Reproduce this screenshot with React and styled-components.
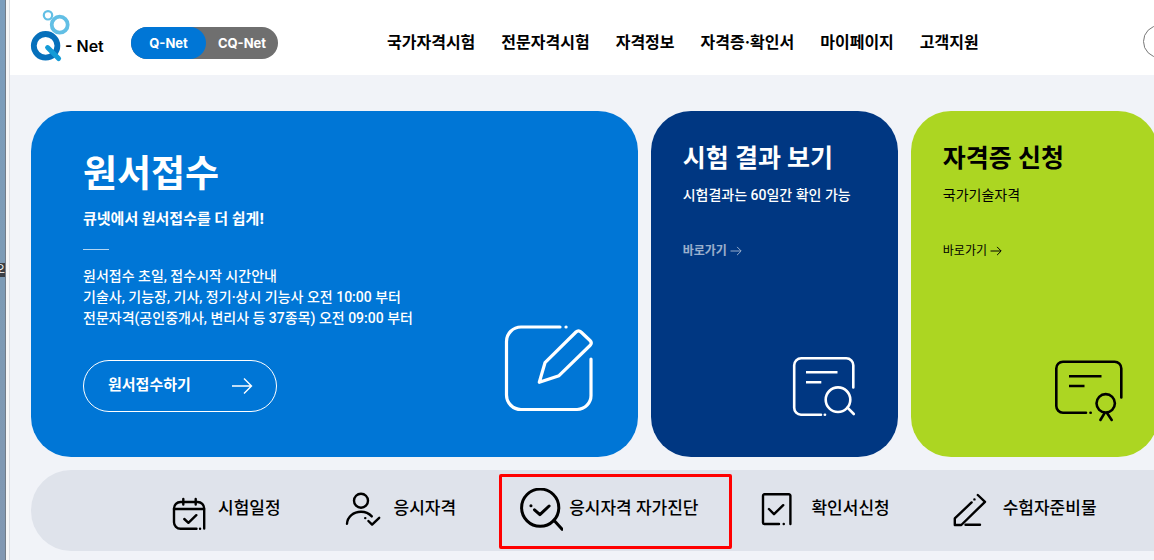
import React from "react";
import styled, { createGlobalStyle, css } from "styled-components";

const GlobalStyle = createGlobalStyle`
  * {
    box-sizing: border-box;
  }

  body {
    margin: 0;
    overflow: hidden;
    background: #f1f3f8;
    color: #000;
    font-family: Inter, "Noto Sans CJK KR", sans-serif;
  }

  h2, p, ul {
    margin: 0;
    padding: 0;
  }

  a {
    color: inherit;
    text-decoration: none;
  }
`;

const korean = `Roboto, "Noto Sans CJK KR", sans-serif`;

const navItems = [
  "국가자격시험",
  "전문자격시험",
  "자격정보",
  "자격증·확인서",
  "마이페이지",
  "고객지원",
];

const Logo = () => (
  <LogoLink href="#home" aria-label="Q-Net">
    <svg width="34" height="54" viewBox="0 0 34 54" fill="none">
      <circle cx="17" cy="5.3" r="4.2" stroke="#62bfe5" strokeWidth="2.2" />
      <circle cx="28.7" cy="14.7" r="8" stroke="#62bfe5" strokeWidth="3.8" />
      <circle cx="14.6" cy="35.8" r="11.8" stroke="#0670bb" strokeWidth="5.8" />
      <path d="M16.6 37.6L27.6 48.6" stroke="#149bd7" strokeWidth="5" strokeLinecap="round" />
    </svg>
    <LogoText>- Net</LogoText>
  </LogoLink>
);

const Arrow = ({ size, weight }) => (
  <svg width={size} height={size} viewBox="0 0 22 22" fill="none" stroke="currentColor" strokeWidth={weight}>
    <path d="M1 11H20M13 3.5L20.5 11L13 18.5" />
  </svg>
);

const WriteIcon = () => (
  <Drawing width="90" height="88" viewBox="0 0 90 88" strokeWidth="3.2">
    <path d="M56 3H17A14.5 14.5 0 0 0 2.5 17.5V71A14.5 14.5 0 0 0 17 85.5H73A14 14 0 0 0 87 71V35" />
    <path d="M62 3H62.1" />
    <path d="M35.3 58.3L41 38.7L72 8Q74.5 5.5 77 8L86 16.5Q88.5 19 86 21.5L55 51.7Z" />
  </Drawing>
);

const ResultIcon = () => (
  <Drawing width="72" height="66" viewBox="0 0 72 66" strokeWidth="2.6">
    <path d="M29 58.7H9A7 7 0 0 1 2.2 51.7V9.3A7 7 0 0 1 9.2 2.3H54.3A7 7 0 0 1 61.3 9.3V31.5" />
    <path d="M32.8 58.7H33" />
    <path d="M14 16.3H45.5M14 26.3H29.3" strokeLinecap="butt" />
    <circle cx="46" cy="43.7" r="12.3" />
    <path d="M55.5 51.7L61.8 58" />
  </Drawing>
);

const CertificateIcon = () => (
  <Drawing width="70" height="63" viewBox="0 0 70 63" strokeWidth="2.6">
    <path d="M32 53.7H9A6.7 6.7 0 0 1 2.3 47V9.4A6.7 6.7 0 0 1 9 2.7H60.6A6.7 6.7 0 0 1 67.3 9.4V38.5" />
    <path d="M36.5 53.7H36.7" />
    <path d="M15 17.3H47.5M15 27H30.5" strokeLinecap="butt" />
    <circle cx="51.7" cy="44.3" r="9.2" />
    <path d="M50.4 54.3L46.4 61M53.2 54.3L57.7 61" />
  </Drawing>
);

const CalendarIcon = () => (
  <Drawing width="44" height="44" viewBox="0 0 44 44" strokeWidth="2.4">
    <path d="M28.5 40.7H12.5A6.5 6.5 0 0 1 6 34.2V20.5A6.5 6.5 0 0 1 12.5 14H29.7A6.5 6.5 0 0 1 36.2 20.5V40.5" />
    <path d="M6 21H36M15.3 11V16.5M27.7 11V16.5M32 40.7H32.1M16.3 31L20.4 34.8L28.3 27.2" />
  </Drawing>
);

const PersonIcon = () => (
  <Drawing width="44" height="44" viewBox="0 0 44 44" strokeWidth="2.4">
    <circle cx="17" cy="12.7" r="7" />
    <path d="M3 35.8C3.4 28.6 9.5 23.7 17 23.7C21.5 23.7 25 25.3 27.8 28.4" />
    <path d="M21.2 30.1H21.3M24.4 33L28.1 36.6L35.2 29.8" />
  </Drawing>
);

const DiagnosisIcon = () => (
  <Drawing width="44" height="44" viewBox="0 0 44 44" strokeWidth="3">
    <circle cx="21.2" cy="19.7" r="18.6" />
    <path d="M34.9 32.3L43.1 41.3" />
    <path d="M11.9 17.7H12M15.5 21.8L20.9 26.6L30.1 18" />
  </Drawing>
);

const DocumentIcon = () => (
  <Drawing width="44" height="44" viewBox="0 0 44 44" strokeWidth="2.4">
    <path d="M18 36H3.4A1.5 1.5 0 0 1 2 34.6V7.8A1.5 1.5 0 0 1 3.4 6.3H27.9A1.5 1.5 0 0 1 29.4 7.8V36" />
    <path d="M22.7 36H22.8M7.9 21L13 26.2L22.2 17.2" />
  </Drawing>
);

const PencilIcon = () => (
  <Drawing width="44" height="44" viewBox="0 0 44 44" strokeWidth="2.4">
    <path d="M18.6 14.4L1.8 30.4V37H8.3L32 13.8L24.8 7" />
    <path d="M21.4 11.4H21.5M12.5 36.8H27" />
  </Drawing>
);

const quickItems = [
  { label: "시험일정", Icon: CalendarIcon },
  { label: "응시자격", Icon: PersonIcon },
  { label: "응시자격 자가진단", Icon: DiagnosisIcon, marked: true },
  { label: "확인서신청", Icon: DocumentIcon },
  { label: "수험자준비물", Icon: PencilIcon },
];

const App = () => {
  return (
    <Screen>
      <GlobalStyle />
      <Desktop>
        <DesktopLabel>오</DesktopLabel>
      </Desktop>
      <Browser>
        <Header>
          <Logo />
          <Switcher>
            <SiteButton type="button" $active>
              Q-Net
            </SiteButton>
            <SiteButton type="button">CQ-Net</SiteButton>
          </Switcher>
          <Nav>
            {navItems.map((item) => (
              <a href="#menu" key={item}>
                {item}
              </a>
            ))}
          </Nav>
          <RoundButton type="button" aria-label="검색" />
        </Header>
        <Main>
          <Cards>
            <Hero>
              <HeroText>
                <HeroTitle>원서접수</HeroTitle>
                <HeroLead>큐넷에서 원서접수를 더 쉽게!</HeroLead>
                <Divider />
                <HeroBody>
                  원서접수 초일, 접수시작 시간안내
                  <br />
                  기술사, 기능장, 기사, 정기·상시 기능사 오전 10:00 부터
                  <br />
                  전문자격(공인중개사, 변리사 등 37종목) 오전 09:00 부터
                </HeroBody>
                <ApplyButton type="button">
                  <span>원서접수하기</span>
                  <Arrow size="22" weight="1.4" />
                </ApplyButton>
              </HeroText>
              <WriteIcon />
            </Hero>
            <Card $bg="#003782" $color="#fff" $strong>
              <CardTitle>시험 결과 보기</CardTitle>
              <CardText>시험결과는 60일간 확인 가능</CardText>
              <CardLink href="#result" $faded>
                바로가기 <Arrow size="12" weight="1.8" />
              </CardLink>
              <CardIcon>
                <ResultIcon />
              </CardIcon>
            </Card>
            <Card $bg="#acd622" $color="#000">
              <CardTitle>자격증 신청</CardTitle>
              <CardText>국가기술자격</CardText>
              <CardLink href="#certificate">
                바로가기 <Arrow size="12" weight="1.8" />
              </CardLink>
              <CardIcon>
                <CertificateIcon />
              </CardIcon>
            </Card>
          </Cards>
          <QuickMenu>
            {quickItems.map(({ label, Icon, marked }) => (
              <QuickItem key={label} $marked={marked}>
                <QuickLink href="#quick">
                  <Icon />
                  <span>{label}</span>
                </QuickLink>
              </QuickItem>
            ))}
          </QuickMenu>
        </Main>
      </Browser>
    </Screen>
  );
};

export default App;

const Screen = styled.div`
  display: flex;
  min-height: 100vh;
  overflow: hidden;
`;

const Desktop = styled.div`
  flex: none;
  display: flex;
  align-items: center;
  justify-content: flex-end;
  width: 6px;
  overflow: hidden;
  background: linear-gradient(#7c9ebd, #7d9bb5 50%, #8298b2);
  border-right: 1px solid #737d88;
`;

const DesktopLabel = styled.span`
  margin-top: -20px;
  color: #fff;
  font-size: 12px;
  line-height: 14px;
  background: #3b3f45;
`;

const Browser = styled.div`
  flex: 1;
  min-width: 0;
  border-left: 3px solid #f7f7f7;
  box-shadow: inset 1px 0 #dcdee2;
`;

const Header = styled.header`
  display: flex;
  align-items: center;
  height: 75px;
  margin-left: 1px;
  padding-left: 21px;
  background: #fff;
`;

const LogoLink = styled.a`
  display: flex;
  align-items: center;
  flex: none;
  width: 100px;
  padding-bottom: 2px;
  white-space: nowrap;

  svg {
    flex: none;
    overflow: visible;
  }
`;

const LogoText = styled.span`
  padding-top: 18px;
  font-size: 16px;
  font-weight: 600;
  line-height: 20px;
`;

const Switcher = styled.div`
  display: flex;
  flex: none;
  height: 32px;
  margin-top: 11px;
  border-radius: 16px;
  background: #6f6f6f;
`;

const SiteButton = styled.button`
  width: 72px;
  padding: 0;
  border: none;
  border-radius: 16px;
  background: transparent;
  color: #fff;
  font: inherit;
  font-size: 13px;
  font-weight: 700;
  cursor: pointer;

  ${({ $active }) =>
    $active &&
    css`
      width: 75px;
      background: #0076d6;
    `}
`;

const Nav = styled.nav`
  display: flex;
  flex: none;
  gap: 26px;
  margin-top: 8px;
  margin-left: 109px;
  font-size: 16px;
  font-weight: 700;
  line-height: 24px;
`;

const RoundButton = styled.button`
  flex: none;
  width: 33px;
  height: 33px;
  margin-top: 8px;
  margin-right: -22px;
  margin-left: auto;
  border: 1px solid #777;
  border-radius: 50%;
  background: #fff;
`;

const Main = styled.main`
  margin-right: -4px;
  padding: 36px 0 0 22px;
`;

const Cards = styled.div`
  display: grid;
  grid-template-columns: minmax(0, 27fr) minmax(0, 11fr) minmax(0, 11fr);
  gap: 13px;
`;

const Hero = styled.section`
  display: flex;
  align-items: flex-end;
  justify-content: space-between;
  padding: 36px 44px 45px 52px;
  border-radius: 40px;
  background: #0076d6;
  color: #fff;
`;

const HeroText = styled.div`
  white-space: nowrap;
`;

const HeroTitle = styled.h2`
  font-size: 37px;
  font-weight: 700;
  line-height: 54px;
`;

const HeroLead = styled.p`
  margin-top: 7px;
  font-size: 15px;
  font-weight: 700;
  line-height: 22px;
`;

const Divider = styled.div`
  width: 26px;
  height: 1px;
  margin: 19px 0 16px;
  background: #b3d6f3;
`;

const HeroBody = styled.p`
  font-family: ${korean};
  font-size: 14px;
  font-weight: 500;
  line-height: 21px;
`;

const ApplyButton = styled.button`
  display: flex;
  align-items: center;
  justify-content: space-between;
  width: 194px;
  height: 52px;
  margin-top: 31px;
  padding: 0 23px 0 24px;
  border: 1px solid #fff;
  border-radius: 26px;
  background: none;
  color: #fff;
  font-family: ${korean};
  font-size: 15px;
  font-weight: 700;
  line-height: 22px;
  cursor: pointer;

  span {
    padding-bottom: 2px;
  }
`;

const Card = styled.section`
  display: flex;
  flex-direction: column;
  align-items: flex-start;
  padding: 30px 34px 35px 32px;
  border-radius: 40px;
  background: ${({ $bg }) => $bg};
  color: ${({ $color }) => $color};
  font-family: ${korean};
  font-weight: ${({ $strong }) => ($strong ? 500 : 400)};
  white-space: nowrap;
`;

const CardTitle = styled.h2`
  font-size: 25px;
  font-weight: 700;
  line-height: 36px;
`;

const CardText = styled.p`
  margin-top: 8px;
  font-size: 14px;
  line-height: 20px;
`;

const CardLink = styled.a`
  display: flex;
  align-items: center;
  gap: 3px;
  margin-top: 38px;
  font-size: 12px;
  font-weight: ${({ $faded }) => ($faded ? 700 : 400)};
  line-height: 16px;
  opacity: ${({ $faded }) => ($faded ? 0.6 : 1)};
`;

const CardIcon = styled.div`
  align-self: flex-end;
  margin-top: auto;
`;

const Drawing = styled.svg`
  display: block;
  flex: none;
  fill: none;
  stroke: currentColor;
  stroke-linecap: round;
  stroke-linejoin: round;
`;

const QuickMenu = styled.ul`
  display: flex;
  align-items: center;
  gap: 63px;
  height: 81px;
  margin-top: 13px;
  padding-bottom: 1px;
  padding-left: 137px;
  border-radius: 40px 0 0 40px;
  background: #dfe3eb;
  list-style: none;
`;

const QuickItem = styled.li`
  position: relative;
  flex: none;

  ${({ $marked }) =>
    $marked &&
    css`
      &::after {
        content: "";
        position: absolute;
        inset: -14px -34px -17px -20px;
        border: 3px solid #f00;
        border-radius: 2px;
        pointer-events: none;
      }
    `}
`;

const QuickLink = styled.a`
  display: flex;
  align-items: center;
  gap: 6px;
  font-family: ${korean};
  font-size: 17px;
  font-weight: 500;
  line-height: 24px;

  span {
    padding-bottom: 4px;
  }
`;
